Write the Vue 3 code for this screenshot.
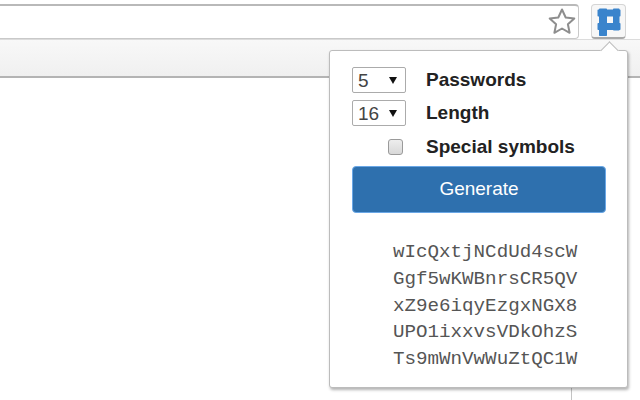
<template>
  <div class="browser">
    <header class="toolbar">
      <div class="omnibox">
        <svg class="star" width="30" height="30" viewBox="0 0 30 30">
          <path d="M15 2.500l3.700 8 8.600 1-6.400 5.800 1.700 8.500-7.600-4.300-7.600 4.300 1.700-8.500-6.400-5.800 8.600-1z" fill="#fff" stroke="#8e8e8e" stroke-width="2" stroke-linejoin="round" />
        </svg>
      </div>
      <button class="ext-button">
        <svg width="26" height="30" viewBox="0 0 26 30">
          <path d="M3.750 3.250h6.500v26h-6.500zM17.750 3.250h5v20.500h-5zM2.250 4.250h21.500v5.500h-21.500zM2.250 17.750h21.500v5.500h-21.500z" fill="#3a84cc" stroke="#3a84cc" stroke-width="1.500" stroke-linejoin="round" />
        </svg>
      </button>
    </header>
    <div class="bookmarks"></div>
    <main class="page"><div class="page-line"></div></main>

    <div class="popup">
      <span class="notch"></span>
      <div class="row">
        <div class="select-wrap">
          <select v-model="count">
            <option v-for="n in [1, 5, 10]" :key="n" :value="n">{{ n }}</option>
          </select>
        </div>
        <label>Passwords</label>
      </div>
      <div class="row">
        <div class="select-wrap">
          <select v-model="length">
            <option v-for="n in [8, 16, 32]" :key="n" :value="n">{{ n }}</option>
          </select>
        </div>
        <label>Length</label>
      </div>
      <div class="row check-row">
        <input type="checkbox" class="check" />
        <label>Special symbols</label>
      </div>
      <button class="generate">Generate</button>
      <ul class="results">
        <li v-for="p in passwords" :key="p">{{ p }}</li>
      </ul>
    </div>
  </div>
</template>

<script setup>
import { ref } from "vue";

const count = ref(5);
const length = ref(16);

const passwords = [
  "wIcQxtjNCdUd4scW",
  "Ggf5wKWBnrsCR5QV",
  "xZ9e6iqyEzgxNGX8",
  "UPO1ixxvsVDkOhzS",
  "Ts9mWnVwWuZtQC1W",
];
</script>

<style scoped>
.browser {
  position: relative;
  width: 640px;
  height: 400px;
  overflow: hidden;
  background: #fff;
  font-family: "Liberation Sans", Arial, sans-serif;
}

.toolbar {
  display: flex;
  align-items: flex-start;
  gap: 12px;
  height: 39px;
  padding: 4px 14px 0 0;
  box-sizing: border-box;
  background: #fff;
}

.omnibox {
  flex: 1;
  display: flex;
  justify-content: flex-end;
  align-items: center;
  height: 35px;
  padding-right: 1px;
  box-sizing: border-box;
  background: #fff;
  border: 1px solid #c9c9c9;
  border-top: 2px solid #b9b9b9;
  border-left: 0;
  border-radius: 0 4px 4px 0;
}

.star {
  display: block;
}

.ext-button {
  display: flex;
  align-items: center;
  justify-content: center;
  width: 35px;
  height: 35px;
  padding: 0;
  background: #f7f7f7;
  border: 1px solid #d5d5d5;
  border-bottom: 2px solid #a9a9a9;
  border-radius: 4px;
}

.bookmarks {
  height: 39px;
  box-sizing: border-box;
  background: linear-gradient(#f8f8f8, #f0f0f0);
  border-top: 1px solid #dcdcdc;
  border-bottom: 2px solid #b4b4b4;
}

.page {
  display: flex;
  justify-content: flex-end;
  height: 322px;
  padding-right: 68px;
}

.page-line {
  width: 1px;
  background: #c4c4c4;
}

.popup {
  position: absolute;
  top: 50px;
  left: 329px;
  width: 299px;
  height: 338px;
  box-sizing: border-box;
  padding: 16px 22px 0;
  background: #fff;
  border: 1px solid #bcbcbc;
  border-radius: 3px;
  box-shadow: 1px 2px 3px rgba(0, 0, 0, 0.3);
}

.notch {
  position: absolute;
  top: -7px;
  left: 273px;
  width: 12px;
  height: 12px;
  background: #fff;
  border-top: 1px solid #bcbcbc;
  border-left: 1px solid #bcbcbc;
  transform: rotate(45deg);
}

.row {
  display: flex;
  align-items: center;
  height: 26px;
  margin-bottom: 7px;
}

.row label {
  margin-left: 20px;
  font-size: 19px;
  font-weight: 700;
  color: #222;
}

.select-wrap {
  position: relative;
  width: 54px;
  height: 26px;
}

.select-wrap::after {
  content: "";
  position: absolute;
  top: 10px;
  right: 9px;
  border-left: 4px solid transparent;
  border-right: 4px solid transparent;
  border-top: 7px solid #111;
  pointer-events: none;
}

select {
  width: 100%;
  height: 100%;
  padding: 0 0 0 5px;
  box-sizing: border-box;
  appearance: none;
  background: #fff;
  border: 1px solid #ababab;
  border-radius: 2px;
  font-family: inherit;
  font-size: 19px;
  color: #444;
}

.check-row {
  margin-bottom: 0;
  padding: 1px 0 0 36px;
  height: 27px;
  box-sizing: border-box;
}

.check-row label {
  margin-left: 23px;
}

.check {
  width: 15px;
  height: 16px;
  margin: 0;
  appearance: none;
  background: linear-gradient(#ededed, #d8d8d8);
  border: 1px solid #9a9a9a;
  border-radius: 3px;
}

.generate {
  display: block;
  width: 254px;
  height: 47px;
  margin-top: 6px;
  padding: 0 0 2px;
  background: #2e70ae;
  border: 1px solid #6aa7e6;
  border-radius: 4px;
  font-family: inherit;
  font-size: 19px;
  color: #fff;
}

.results {
  list-style: none;
  margin: 26px 0 0;
  padding: 0 0 0 41px;
  font-family: "Liberation Mono", "Courier New", monospace;
  font-size: 19.2px;
  line-height: 26.8px;
  color: #555;
}
</style>
